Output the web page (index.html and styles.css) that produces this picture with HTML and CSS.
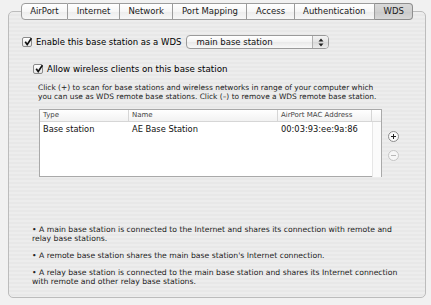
FILE: index.html
```html
<!DOCTYPE html>
<html lang="en">
<head>
  <meta charset="UTF-8" />
  <title>AirPort Setup - WDS</title>
  <link rel="stylesheet" href="styles.css">
</head>
<body>

  <!-- Tab strip -->
  <div class="tabs">
    <span class="tab">AirPort</span>
    <span class="tab">Internet</span>
    <span class="tab">Network</span>
    <span class="tab">Port Mapping</span>
    <span class="tab">Access</span>
    <span class="tab">Authentication</span>
    <span class="tab selected">WDS</span>
  </div>

  <!-- WDS pane -->
  <div class="panel">
    <div class="wds-row">
      <label class="check">
        <span class="box"><svg width="10" height="10" viewBox="0 0 10 10"><path d="M2.2 4.8 L4.2 7.6 L8.4 1.2" fill="none" stroke="#111" stroke-width="1.7"/></svg></span>
        Enable this base station as a WDS
      </label>
      <div class="popup">
        <span class="popup-text">main base station</span>
        <span class="popup-arrows">
          <svg width="6" height="9" viewBox="0 0 6 9"><path d="M3 0.5 L5.5 3.5 L0.5 3.5 Z M3 8.5 L5.5 5.5 L0.5 5.5 Z" fill="#222"/></svg>
        </span>
      </div>
    </div>

    <div class="sub">
      <label class="check">
        <span class="box"><svg width="10" height="10" viewBox="0 0 10 10"><path d="M2.2 4.8 L4.2 7.6 L8.4 1.2" fill="none" stroke="#111" stroke-width="1.7"/></svg></span>
        Allow wireless clients on this base station
      </label>

      <p class="desc">Click (+) to scan for base stations and wireless networks in range of your computer which<br>you can use as WDS remote base stations. Click (&ndash;) to remove a WDS remote base station.</p>

      <div class="list-area">
        <div class="table">
          <div class="thead">
            <span class="col-type">Type</span>
            <span class="col-name">Name</span>
            <span class="col-mac">AirPort MAC Address</span>
            <span class="col-scroll"></span>
          </div>
          <div class="trow">
            <span class="col-type">Base station</span>
            <span class="col-name">AE Base Station</span>
            <span class="col-mac">00:03:93:ee:9a:86</span>
            <span class="col-scroll"></span>
          </div>
        </div>
        <div class="pm-buttons">
          <span class="round-btn">
            <svg width="11" height="11" viewBox="0 0 11 11"><circle cx="5.5" cy="5.5" r="5" fill="#fafafa" stroke="#8c8c8c"/><path d="M5.5 3 V8 M3 5.5 H8" stroke="#222" stroke-width="1"/></svg>
          </span>
          <span class="round-btn">
            <svg width="11" height="11" viewBox="0 0 11 11"><circle cx="5.5" cy="5.5" r="5" fill="#f6f6f6" stroke="#c4c4c4"/><path d="M3 5.5 H8" stroke="#b8b8b8" stroke-width="1"/></svg>
          </span>
        </div>
      </div>
    </div>

    <!-- Explanations -->
    <div class="notes">
      <p>&bull; A main base station is connected to the Internet and shares its connection with remote and<br>relay base stations.</p>
      <p>&bull; A remote base station shares the main base station's Internet connection.</p>
      <p>&bull; A relay base station is connected to the main base station and shares its Internet connection<br>with remote and other relay base stations.</p>
    </div>
  </div>

</body>
</html>
```

FILE: styles.css
```css
body {
  margin: 0;
  padding: 3px 5px 7px 8px;
  height: 305px;
  box-sizing: border-box;
  display: flex;
  flex-direction: column;
  background: #f1f1f1;
  font-family: "DejaVu Sans", sans-serif;
  color: #111;
}

/* Tabs */
.tabs {
  display: flex;
  justify-content: center;
  margin-bottom: -9px;
  position: relative;
  z-index: 1;
}

.tab {
  height: 15px;
  line-height: 15px;
  padding: 0 8.5px;
  font-size: 8.5px;
  color: #1a1a1a;
  border: 1px solid #9c9c9c;
  border-left: none;
  background: linear-gradient(#ffffff, #f6f6f6 50%, #ececec 51%, #f7f7f7);
}

.tab:first-child {
  border-left: 1px solid #9c9c9c;
  border-radius: 4px 0 0 4px;
}

.tab:last-child {
  border-radius: 0 4px 4px 0;
}

.tab.selected {
  background: linear-gradient(#d9d9d9, #cfcfcf 50%, #c9c9c9 51%, #d8d8d8);
  border-color: #8e8e8e;
}

/* Panel */
.panel {
  flex: 1;
  display: flex;
  flex-direction: column;
  border: 1px solid #bcbcbc;
  border-radius: 5px;
  padding: 23px 14px 11px 13px;
  background: repeating-linear-gradient(#ededed 0 2px, #e8e8e8 2px 4px);
}

.wds-row {
  display: flex;
  align-items: center;
  gap: 5px;
}

.check {
  display: flex;
  align-items: center;
  gap: 4px;
  font-size: 8.5px;
  color: #000;
}

.box {
  width: 10px;
  height: 10px;
  box-sizing: border-box;
  border: 1px solid #8a8a8a;
  border-radius: 2px;
  background: linear-gradient(#ffffff, #e6e6e6);
  display: flex;
  align-items: center;
  justify-content: center;
}

.box svg {
  margin-top: -1px;
  margin-right: -2px;
}

.popup {
  width: 143px;
  height: 14px;
  box-sizing: border-box;
  display: flex;
  border: 1px solid #9a9a9a;
  border-radius: 4px;
  background: linear-gradient(#ffffff, #f3f3f3 50%, #e9e9e9 51%, #f8f8f8);
  font-size: 8.5px;
}

.popup-text {
  flex: 1;
  padding-left: 9px;
  line-height: 12px;
}

.popup-arrows {
  width: 15px;
  border-left: 1px solid #b0b0b0;
  display: flex;
  align-items: center;
  justify-content: center;
  background: linear-gradient(#f4f4f4, #e2e2e2 50%, #d8d8d8 51%, #ececec);
  border-radius: 0 3px 3px 0;
}

/* Indented section */
.sub {
  padding-left: 11px;
  margin-top: 15px;
}

.sub .check {
  font-size: 8.7px;
}

.desc {
  margin: 9px 0 8px 5px;
  font-size: 7.45px;
  line-height: 9px;
  color: #222;
}

.list-area {
  display: flex;
  gap: 6px;
  padding-left: 6px;
}

.table {
  width: 343px;
  height: 68px;
  box-sizing: border-box;
  border: 1px solid #a9a9a9;
  background: #fff;
}

.thead, .trow {
  display: flex;
}

.thead {
  height: 11px;
  border-bottom: 1px solid #d6d6d6;
  background: linear-gradient(#ffffff, #f2f2f2);
  font-size: 7px;
  line-height: 11px;
  color: #444;
}

.thead span {
  border-right: 1px solid #d6d6d6;
}

.trow {
  font-size: 8.3px;
  line-height: 15px;
  color: #111;
}

.col-type, .col-name, .col-mac {
  box-sizing: border-box;
  padding-left: 3px;
}

.col-type { width: 89px; }
.col-name { width: 149px; }
.col-mac { width: 94px; }

.thead .col-scroll {
  flex: 1;
  border-right: none;
}

.trow .col-scroll {
  flex: 1;
  height: 55px;
  border-left: 1px solid #e6e6e6;
  background: #fbfbfb;
}

.pm-buttons {
  display: flex;
  flex-direction: column;
  gap: 8px;
  padding-top: 22px;
}

.round-btn {
  display: block;
  width: 11px;
  height: 11px;
}

.round-btn svg {
  display: block;
}

/* Notes at the bottom */
.notes {
  margin-top: auto;
  padding-left: 10px;
  font-size: 7.7px;
  line-height: 9px;
  color: #222;
}

.notes p {
  margin: 0 0 8px 0;
}

.notes p:last-child {
  margin-bottom: 0;
}
```
